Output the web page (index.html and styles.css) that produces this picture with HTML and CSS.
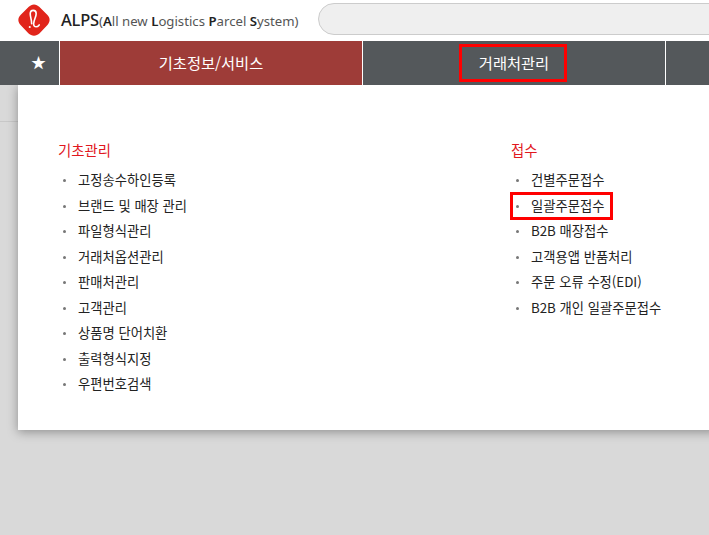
FILE: index.html
```html
<!DOCTYPE html>
<html lang="ko">
<head>
<meta charset="utf-8">
<title>ALPS</title>
<link rel="stylesheet" href="styles.css">
</head>
<body>
<header class="top">
  <svg class="logo" width="34" height="34" viewBox="0 0 36 34">
    <path d="M18 .5c2.200 0 4 1 5.500 2.500l8.500 8.500c3.400 3.400 3.400 7.600 0 11L24 31c-3.500 3.500-8.500 3.500-12 0L4 22.500c-3.400-3.400-3.400-7.600 0-11L12.500 3C14 1.500 15.800 .5 18 .5z" fill="#e1251b"/>
    <path d="M15.500 21c0-5 -1.500-7 -1.500-10.500c0-2.300 1.300-3.700 3.200-3.700c1.900 0 3.100 1.400 3.100 3.600c0 3.500-2.400 6-2.700 10.600c-.1 2 1 3.200 2.600 3.200c1.400 0 2.400-.8 3.300-2" fill="none" stroke="#fff" stroke-width="1.700" stroke-linecap="round"/>
    <circle cx="13.500" cy="24.500" r="1.100" fill="#fff"/>
  </svg>
  <div class="brand"><b>ALPS</b><span class="tag">(<b>A</b>ll new <b>L</b>ogistics <b>P</b>arcel <b>S</b>ystem)</span></div>
  <div class="search"></div>
</header>
<nav class="nav">
  <div class="cell star">★</div>
  <div class="cell active">기초정보/서비스</div>
  <div class="cell"><span class="mark">거래처관리</span></div>
  <div class="cell rest"></div>
</nav>
<main class="stage">
  <div class="strip"></div>
  <section class="panel">
    <div class="col col-a">
      <h3>기초관리</h3>
      <ul>
        <li>고정송수하인등록</li>
        <li>브랜드 및 매장 관리</li>
        <li>파일형식관리</li>
        <li>거래처옵션관리</li>
        <li>판매처관리</li>
        <li>고객관리</li>
        <li>상품명 단어치환</li>
        <li>출력형식지정</li>
        <li>우편번호검색</li>
      </ul>
    </div>
    <div class="col col-b">
      <h3>접수</h3>
      <ul>
        <li>건별주문접수</li>
        <li class="marked">일괄주문접수</li>
        <li>B2B 매장접수</li>
        <li>고객용앱 반품처리</li>
        <li>주문 오류 수정(EDI)</li>
        <li>B2B 개인 일괄주문접수</li>
      </ul>
    </div>
  </section>
</main>
</body>
</html>
```

FILE: styles.css
```css
*, *::before, *::after { box-sizing: border-box; }
html, body { margin: 0; height: 100%; }
body {
  width: 709px;
  height: 535px;
  overflow: hidden;
  background: #d9d9d9;
  font-family: "Noto Sans CJK KR", "Noto Sans", sans-serif;
  color: #222;
  display: flex;
  flex-direction: column;
}
.top {
  height: 41px;
  flex: none;
  background: #fff;
  display: flex;
  align-items: center;
  padding-left: 17px;
  position: relative;
}
.logo { flex: none; margin-bottom: 2px; }
.brand {
  margin-left: 10px;
  width: 257px;
  flex: none;
  font-family: "Noto Sans", sans-serif;
  font-size: 13.200px;
  color: #222;
  white-space: nowrap;
  margin-bottom: 3px;
}
.brand > b { font-size: 16.500px; font-weight: 500; letter-spacing: -.2px; }
.tag { color: #555; }
.tag b { font-weight: 600; color: #222; }
.search {
  flex: none;
  width: 500px;
  height: 32px;
  margin-bottom: 3px;
  background: #efefef;
  border: 1px solid #ccc;
  border-radius: 16px;
}
.nav { height: 44px; flex: none; display: flex; background: #fff; position: relative; z-index: 1; }
.cell {
  width: 302px;
  margin-right: 1px;
  flex: none;
  background: #54585b;
  color: #fff;
  font-size: 15.300px;
  display: flex;
  align-items: center;
  justify-content: center;
  padding-bottom: 3px;
}
.star { width: 59px; font-size: 15px; padding-left: 18px; }
.active { background: #9e3c38; }
.rest { margin-right: 0; }
.mark {
  width: 108px;
  height: 38px;
  margin: 3px 2px 0 0;
  border: 3px solid #f00;
  display: flex;
  align-items: center;
  justify-content: center;
  padding: 0 0 2px 2px;
}
.stage { flex: 1; position: relative; padding-top: 36px; }
.strip { height: 1px; background: #c8c8c8; }
.panel {
  position: absolute;
  left: 18px;
  top: 0;
  width: 700px;
  height: 345px;
  background: #fff;
  box-shadow: 0 2px 10px rgba(0,0,0,.35);
  display: flex;
  padding-top: 53px;
}
.col-a { width: 453px; padding-left: 40px; }
.col-b { padding-left: 40px; }
h3 {
  margin: 0 0 5px;
  font-size: 14.400px;
  line-height: 24px;
  font-weight: 400;
  color: #e1171e;
}
ul { margin: 0; padding: 0; list-style: none; }
li {
  position: relative;
  height: 25.500px;
  line-height: 25.500px;
  padding-left: 20px;
  font-size: 13.300px;
  color: #222;
  white-space: nowrap;
}
li::before {
  content: "";
  position: absolute;
  left: 5px;
  top: 12px;
  width: 3px;
  height: 3px;
  border-radius: 50%;
  background: #777;
}
.marked::after {
  content: "";
  position: absolute;
  left: -1px;
  top: -1px;
  width: 103px;
  height: 28px;
  border: 3px solid #f00;
}
```
